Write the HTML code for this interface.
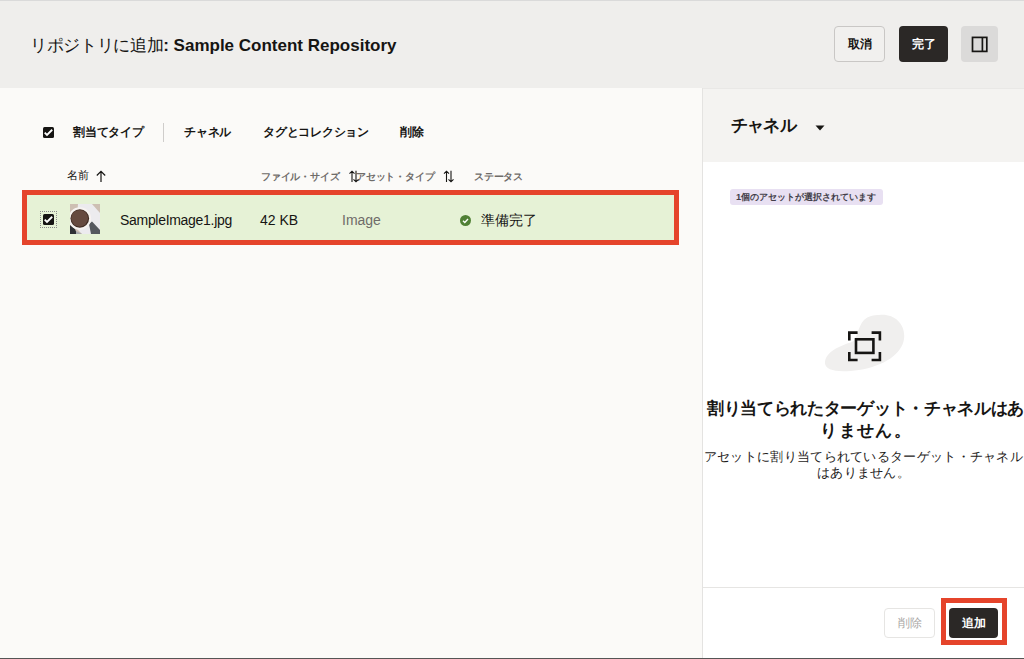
<!DOCTYPE html>
<html><head><meta charset="utf-8">
<style>
*{margin:0;padding:0;box-sizing:border-box}
html,body{width:1024px;height:659px;overflow:hidden;background:#fbfaf8;font-family:"Liberation Sans",sans-serif;color:#161513}
.a{position:absolute}
#topline{left:0;top:0;width:1024px;height:1px;background:#dadada}
#hdr{left:0;top:1px;width:1024px;height:87px;background:#efeeec}
#title{left:30px;top:35px;font-size:17px;line-height:22px;white-space:nowrap}
#title b{font-weight:bold}
.btn{border-radius:4px;font-size:12px;font-weight:bold;display:flex;align-items:center;justify-content:center}
#cancel{left:834px;top:26px;width:51px;height:36px;border:1px solid #c9c7c5;background:#f1f0ee;color:#161513}
#done{left:899px;top:26px;width:49px;height:36px;background:#2b2826;color:#fff}
#toggle{left:961px;top:26px;width:37px;height:36px;background:#dbdad9}
#left{left:0;top:88px;width:702px;height:570px;background:#fbfaf8}
#vline{left:702px;top:88px;width:1px;height:570px;background:#e4e3e1}
#right{left:703px;top:88px;width:321px;height:570px;background:#fff}
#rhdr{left:703px;top:88px;width:321px;height:74px;background:#f4f3f1;border-top:1px solid #e9e8e6}
#bottomline{left:0;top:658px;width:1024px;height:1px;background:#555}
.tb{font-size:12px;letter-spacing:-0.25px;font-weight:bold;line-height:14px;top:125px;white-space:nowrap}
.ch{font-size:10px;letter-spacing:-0.2px;line-height:13px;top:170px;color:#6f6c69;font-weight:bold;white-space:nowrap}
#row{left:22px;top:190px;width:657px;height:55px;border:5px solid #e5442b;background:#e6f2d6}
.cell{font-size:14px;line-height:16px;top:212px;white-space:nowrap}
.cell1{letter-spacing:-0.3px}
</style></head><body>
<div class="a" id="topline"></div>
<div class="a" id="hdr"></div>
<div class="a" id="title"><span style="letter-spacing:-0.35px">リポジトリに追加</span><b>: Sample Content Repository</b></div>
<div class="a btn" id="cancel">取消</div>
<div class="a btn" id="done">完了</div>
<div class="a btn" id="toggle">
  <svg width="17" height="17" viewBox="0 0 17 17"><rect x="1.5" y="1.4" width="14.3" height="14" fill="none" stroke="#161513" stroke-width="1.7"/><line x1="11.4" y1="1" x2="11.4" y2="16" stroke="#161513" stroke-width="1.7"/></svg>
</div>

<div class="a" id="left"></div>
<div class="a" id="vline"></div>
<div class="a" id="right"></div>
<div class="a" id="rhdr"></div>

<!-- toolbar -->
<div class="a" style="left:43px;top:127px;width:11px;height:11px;background:#161513;border-radius:1.5px">
  <svg width="11" height="11" viewBox="0 0 11 11" style="position:absolute;left:0;top:0"><path d="M1.7 5.6 L4 7.9 L9.2 2.8" fill="none" stroke="#fff" stroke-width="1.9"/></svg>
</div>
<div class="a tb" style="left:73px">割当てタイプ</div>
<div class="a" style="left:163px;top:123px;width:1px;height:19px;background:#cfcdcb"></div>
<div class="a tb" style="left:184px">チャネル</div>
<div class="a tb" style="left:263px">タグとコレクション</div>
<div class="a tb" style="left:400px">削除</div>

<!-- column headers -->
<div class="a ch" style="left:67px;color:#161513;font-size:11px;top:169px;font-weight:normal">名前</div>
<svg class="a" style="left:95px;top:170px" width="12" height="13" viewBox="0 0 12 13"><path d="M6 12 V1.5 M1.8 5.5 L6 1.3 L10.2 5.5" fill="none" stroke="#161513" stroke-width="1.2"/></svg>
<div class="a ch" style="left:261px">ファイル・サイズ</div>
<div class="a ch" style="left:356px">アセット・タイプ</div>
<svg class="a" style="left:349px;top:170px" width="12" height="13" viewBox="0 0 12 13"><path d="M3 12 V1.2 M0.5 3.7 L3 1.2 L5.5 3.7 M7 0.8 V11.8 M4.5 9.3 L7 11.8 L9.5 9.3" fill="none" stroke="#161513" stroke-width="1.1"/></svg>
<svg class="a" style="left:443px;top:170px" width="12" height="13" viewBox="0 0 12 13"><path d="M3.5 12 V1.2 M1 3.7 L3.5 1.2 L6 3.7 M8 0.8 V11.8 M5.5 9.3 L8 11.8 L10.5 9.3" fill="none" stroke="#161513" stroke-width="1.1"/></svg>
<div class="a ch" style="left:474px">ステータス</div>

<!-- row -->
<div class="a" id="row"></div>
<div class="a" style="left:40px;top:211px;width:17px;height:17px;border:1px dotted #8a8a8a"></div>
<div class="a" style="left:43px;top:214px;width:11px;height:11px;background:#161513;border-radius:1.5px">
  <svg width="11" height="11" viewBox="0 0 11 11" style="position:absolute;left:0;top:0"><path d="M1.7 5.6 L4 7.9 L9.2 2.8" fill="none" stroke="#fff" stroke-width="1.9"/></svg>
</div>
<svg class="a" style="left:70px;top:204px" width="30" height="30" viewBox="0 0 30 30">
  <rect width="30" height="30" fill="#cdbfb3"/>
  <path d="M8 0 L22 0 L30 9 L30 29 L26 30 L12 30 L6 24 Z" fill="#ecebee"/>
  <path d="M19 20 L22 17.5 L30 26 L30 30 L21 30 Z" fill="#55585e"/>
  <path d="M0 21 L5 25 L7 30 L0 30 Z" fill="#2f3135"/>
  <path d="M6 27 L12 30 L6 30 Z" fill="#a8aaae"/>
  <circle cx="9.8" cy="14.5" r="11.3" fill="#f7f3f1"/>
  <circle cx="9.8" cy="14.5" r="9.3" fill="#3e2a22"/>
  <circle cx="9.6" cy="14.3" r="8.4" fill="#664a40"/>
</svg>
<div class="a cell cell1" style="left:120px">SampleImage1.jpg</div>
<div class="a cell" style="left:260px">42 KB</div>
<div class="a cell" style="left:342px;color:#6f6c69">Image</div>
<svg class="a" style="left:460px;top:215px" width="11" height="11" viewBox="0 0 11 11"><circle cx="5.5" cy="5.5" r="5.5" fill="#508035"/><path d="M3 5.7 L4.8 7.4 L8 4" fill="none" stroke="#fff" stroke-width="1.4"/></svg>
<div class="a cell" style="left:481px">準備完了</div>

<!-- right panel -->
<div class="a" style="left:731px;top:115px;font-size:17px;font-weight:bold;line-height:22px;letter-spacing:-0.8px">チャネル</div>
<svg class="a" style="left:815px;top:124.5px" width="10" height="6" viewBox="0 0 10 6"><path d="M0.5 0.5 L9.5 0.5 L5 5.5 Z" fill="#161513"/></svg>
<div class="a" style="left:730px;top:189px;width:153px;height:16px;background:#e8e0f2;border-radius:3px;font-size:9.3px;line-height:16px;padding-left:6px;white-space:nowrap;color:#433e49;font-weight:bold">1個のアセットが選択されています</div>

<svg class="a" style="left:824px;top:314px" width="81" height="58" viewBox="0 0 81 58"><path d="M55 1 C70 -1 82 10 80 25 C78 40 60 52 35 56 C15 59 0 57 1 48 C2 38 15 32 28 28 C33 26 34 12 40 6 C44 2 50 1 55 1 Z" fill="#f0efee"/></svg>
<svg class="a" style="left:848px;top:331px" width="34" height="31" viewBox="0 0 34 31">
  <path d="M1.3 9.6 V1.6 H9.6 M23.6 1.6 H31.9 V9.6 M31.9 21 V29 H23.6 M9.6 29 H1.3 V21" fill="none" stroke="#161513" stroke-width="2.6"/>
  <rect x="8" y="8.3" width="17.4" height="13.6" fill="none" stroke="#161513" stroke-width="2.6"/>
</svg>
<div class="a" style="left:665px;top:397.5px;width:401px;text-align:center;font-size:17px;font-weight:bold;line-height:22px;white-space:nowrap;letter-spacing:-0.3px">割り当てられたターゲット・チャネルはあ<br><span style="letter-spacing:1.4px;margin-right:-1.4px">りません。</span></div>
<div class="a" style="left:663px;top:449px;width:401px;text-align:center;font-size:13.3px;line-height:16px;color:#1e1c1a;white-space:nowrap;letter-spacing:0.3px">アセットに割り当てられているターゲット・チャネル<br>はありません。</div>

<div class="a" style="left:703px;top:587px;width:321px;height:1px;background:#e6e5e3"></div>
<div class="a btn" style="left:884px;top:608px;width:51px;height:30px;border:1px solid #e6e5e3;background:#fff;color:#a9a7a5;font-weight:normal">削除</div>
<div class="a" style="left:941px;top:598px;width:66px;height:47px;border:5px solid #e5442b"></div>
<div class="a btn" style="left:949px;top:608px;width:49px;height:30px;background:#2b2826;color:#fff">追加</div>

<div class="a" id="bottomline"></div>
</body></html>
